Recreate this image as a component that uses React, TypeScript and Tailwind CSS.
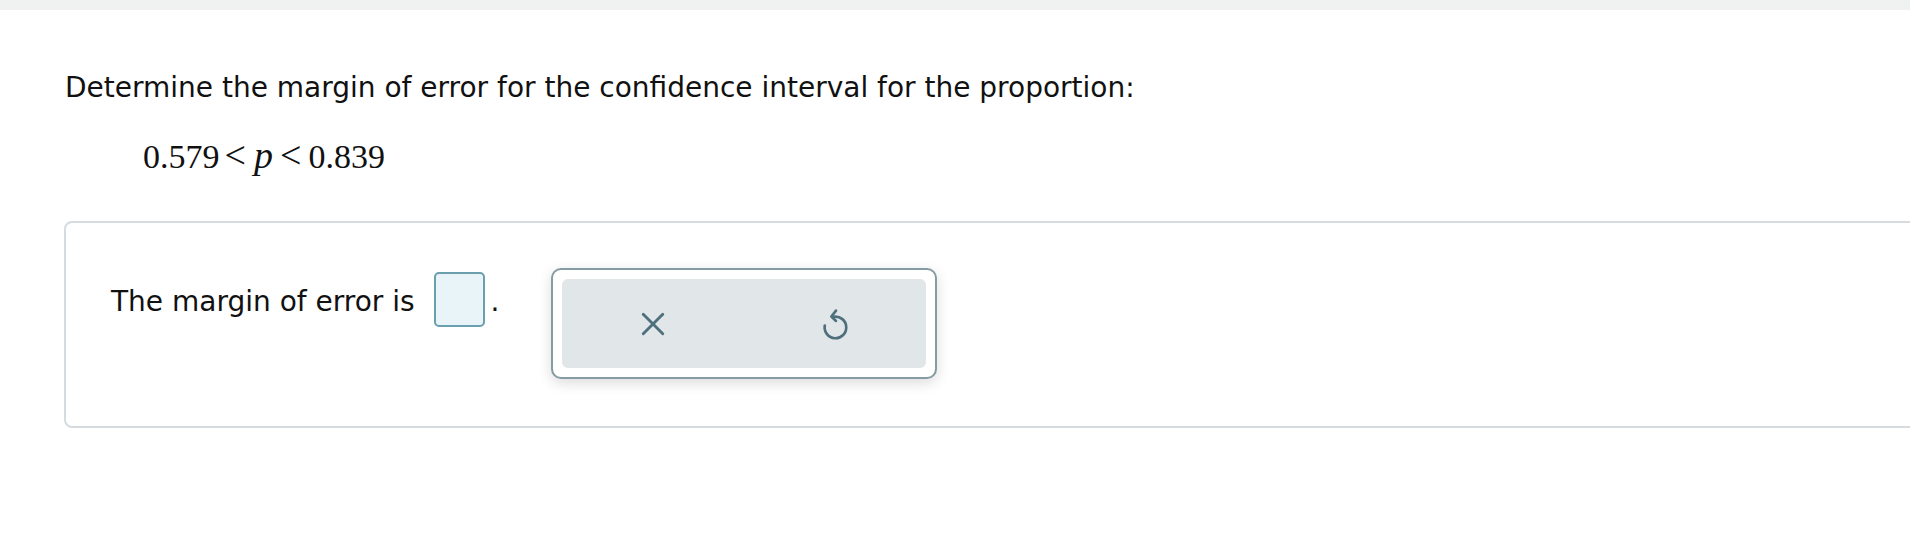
import React from "react";

function XIcon() {
  return (
    <svg width="26" height="26" viewBox="0 0 24 24" fill="none" stroke="#4e6f7c" strokeWidth="2.6" strokeLinecap="round">
      <path d="M3 3 L21 21" />
      <path d="M21 3 L3 21" />
    </svg>
  );
}

function UndoIcon() {
  return (
    <svg width="27" height="35" viewBox="0 0 26 34" fill="none" stroke="#4e6f7c" strokeWidth="2.6" strokeLinecap="round" strokeLinejoin="round">
      <path d="M11 10.5 A10.5 10.5 0 1 1 2.6 19" />
      <path d="M13.5 4.5 L9 10.2 L13.5 14.5" />
    </svg>
  );
}

export default function App() {
  return (
    <div className="w-full overflow-hidden bg-white min-h-[533px] font-['DejaVu_Sans',Verdana,sans-serif] text-[#111]">
      <div className="h-[10px] bg-[#f0f2f2]" />
      <div className="pl-[65px] mt-[61px] text-[28px] leading-[33px] whitespace-nowrap">
        Determine the margin of error for the confidence interval for the proportion:
      </div>
      <div className="pl-[143px] mt-[33px] h-[37px] flex items-baseline text-[34px] leading-[37px] font-['Liberation_Serif','Times_New_Roman',serif]">
        <span>0.579</span>
        <span className="ml-[5px] text-[38px] leading-[37px]">&lt;</span>
        <span className="ml-[8px] italic text-[38px] leading-[37px]">p</span>
        <span className="ml-[7px] text-[38px] leading-[37px]">&lt;</span>
        <span className="ml-[7px]">0.839</span>
      </div>
      <div className="ml-[64px] mt-[47px] w-[1900px] h-[207px] border-2 border-[#d5dbde] rounded-lg pl-[45px] pt-[45px]">
        <div className="flex items-start">
          <div className="flex items-center mt-[4px] h-[55px] text-[28px]">
            <span className="pt-[5px] whitespace-nowrap">The margin of error is</span>
            <div className="ml-[19px] w-[51px] h-[55px] rounded-[5px] border-2 border-[#6a9fae] bg-[#e8f4f7]" />
            <span className="pt-[5px] ml-[6px]">.</span>
          </div>
          <div className="ml-[52px] w-[386px] h-[111px] border-2 border-[#869ba3] rounded-[10px] bg-white p-[9px] shadow-[0_4px_14px_rgba(0,0,0,0.14)]">
            <div className="flex h-full rounded-md bg-[#e1e6e9]">
              <button className="flex-1 flex items-center justify-center">
                <XIcon />
              </button>
              <button className="flex-1 flex items-center justify-center">
                <UndoIcon />
              </button>
            </div>
          </div>
        </div>
      </div>
    </div>
  );
}
